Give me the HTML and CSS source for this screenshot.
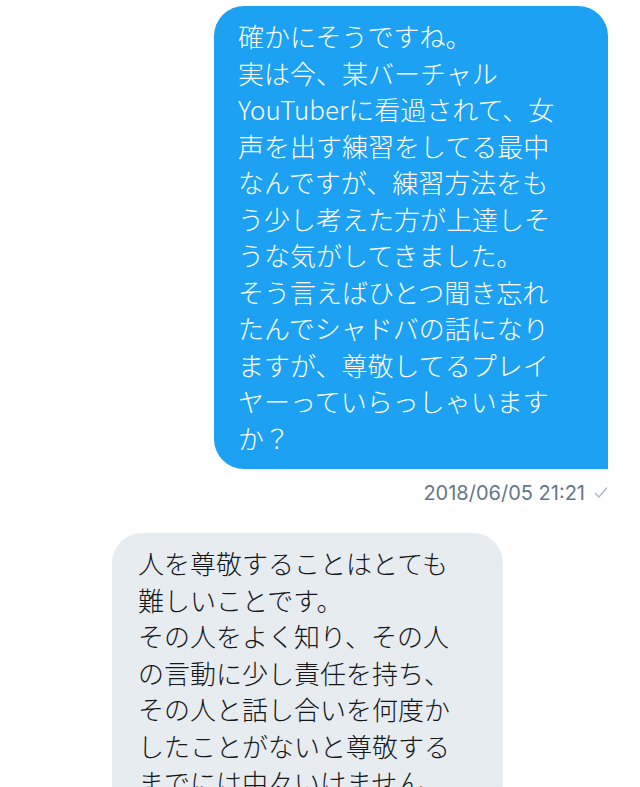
FILE: index.html
```html
<!DOCTYPE html>
<html lang="ja">
<head>
    <meta charset="UTF-8">
    <meta name="viewport" content="width=device-width, initial-scale=1.0">
    <title>メッセージ</title>
    <link rel="stylesheet" href="styles.css">
</head>
<body>

    <div class="conversation">
        <!-- sent message -->
        <div class="message sent">
            <div class="bubble bubble-sent">確かにそうですね。<br>実は今、某バーチャルYouTuberに看過されて、女声を出す練習をしてる最中なんですが、練習方法をもう少し考えた方が上達しそうな気がしてきました。<br>そう言えばひとつ聞き忘れたんでシャドバの話になりますが、尊敬してるプレイヤーっていらっしゃいますか？</div>
            <div class="meta">
                <span class="time">2018/06/05 21:21</span>
                <svg class="check" width="14" height="14" viewBox="0 0 14 14">
                    <polyline points="1.5,7.5 5,11 12.5,2" fill="none" stroke="#aab8c2" stroke-width="1.3" stroke-linecap="round" stroke-linejoin="round"/>
                </svg>
            </div>
        </div>

        <!-- received message -->
        <div class="message received">
            <div class="bubble bubble-received">人を尊敬することはとても難しいことです。<br>その人をよく知り、その人の言動に少し責任を持ち、その人と話し合いを何度かしたことがないと尊敬するまでには中々いけません。</div>
        </div>
    </div>

</body>
</html>
```

FILE: styles.css
```css
body {
    margin: 0;
    background-color: #ffffff;
    font-family: "Noto Sans CJK JP", "Noto Sans", sans-serif;
}
.conversation {
    padding: 6px 32px 0 112px;
    display: flex;
    flex-direction: column;
}
.message {
    display: flex;
    flex-direction: column;
}
.sent {
    align-items: flex-end;
}
.received {
    align-items: flex-start;
    margin-top: 29px;
}
.bubble {
    width: 326px;
    font-size: 26px;
    font-weight: 300;
    line-height: 36.5px;
    border-radius: 30px;
}
.bubble-sent {
    background-color: #1da1f2;
    color: #ffffff;
    padding: 12px 44px 13px 24px;
    border-bottom-right-radius: 0;
}
.bubble-received {
    background-color: #e6ecf0;
    color: #14171a;
    padding: 12px 39px 13px 26px;
    border-bottom-left-radius: 0;
}
.meta {
    display: flex;
    align-items: center;
    gap: 9px;
    margin-top: 13px;
    height: 22px;
}
.time {
    font-family: Inter, "Noto Sans", sans-serif;
    font-size: 20px;
    color: #657786;
}
.check {
    display: block;
}
```
